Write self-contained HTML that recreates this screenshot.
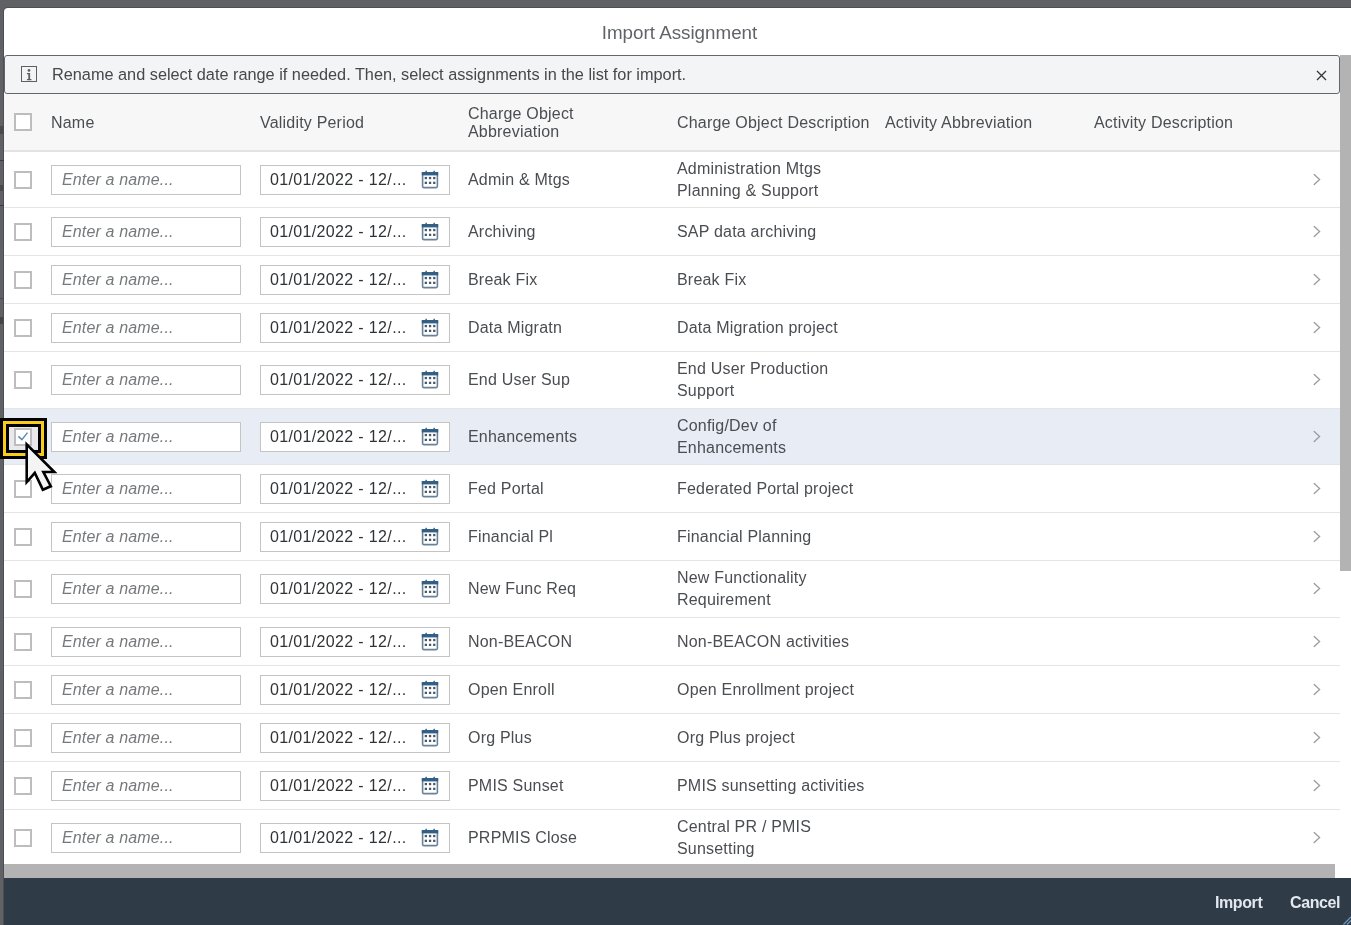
<!DOCTYPE html>
<html><head><meta charset="utf-8"><style>
*{box-sizing:border-box;margin:0;padding:0}
html,body{width:1351px;height:925px;overflow:hidden;background:#5f6164;-webkit-font-smoothing:antialiased;font-family:"Liberation Sans",sans-serif;color:#32363a}
.dlg{will-change:transform;position:absolute;left:4px;top:8px;width:1400px;height:940px;background:#fff;border-radius:4px 0 0 0;box-shadow:0 0 0 1px #4d4f52;overflow:hidden}
.abs{position:absolute}
.title{position:absolute;left:0;top:0;width:1351px;height:47px;text-align:center;font-size:18.8px;line-height:49px;color:#606468}
.info{position:absolute;left:0px;top:47px;width:1336px;height:39px;background:#f2f4f5;border:1px solid #63676b;border-radius:3px}
.info .ic{position:absolute;left:16px;top:10px;width:16px;height:16px;border:1.4px solid #5b6066}
.info .msg{position:absolute;left:47px;top:7px;font-size:16.3px;line-height:22px;white-space:nowrap;color:#45484c}
.info .x{position:absolute;left:1311px;top:14px}
.vs{position:absolute;left:1336px;top:47px;width:15px;height:516px;background:#b3b3b3}
.thead{position:absolute;left:0;top:86px;width:1336px;height:58px;background:#f7f7f7;border-bottom:2px solid #e3e3e3}
.th{position:absolute;font-size:16px;line-height:18px;letter-spacing:0.2px;color:#4a4e52;white-space:nowrap}
.row{position:absolute;left:0;width:1336px;border-bottom:1px solid #e5e5e5;background:#fff}
.row.sel{background:#e8ecf5}
.cb{position:absolute;left:10px;width:18px;height:18px;border:2px solid #bdbdbd;background:#fff;top:50%;margin-top:-9px}
.cb svg{position:absolute;left:0;top:0}
.inp{position:absolute;top:50%;margin-top:-15px;height:30px;width:190px;border:1px solid #c4c4c4;background:#fff}
.inp span{position:absolute;left:11px;top:3px;font-size:16px;line-height:22px;white-space:nowrap}
.nm{left:47px}
.nm span{left:10px;font-style:italic;color:#76797c;letter-spacing:0.15px}
.dt{left:256px}
.dt span{left:9px;color:#303336;letter-spacing:0.35px}
.cal{position:absolute;left:160px;top:3px}
.tx{position:absolute;top:50%;transform:translateY(-50%);font-size:16px;line-height:22px;white-space:nowrap;color:#4a4d51;letter-spacing:0.2px}
.ab{left:464px}
.ds{left:673px}
.chev{position:absolute;left:1309px;top:50%;margin-top:-7px}
.hs{position:absolute;left:0;top:856px;width:1331px;height:14px;background:#b3b3b3}
.foot{position:absolute;left:0;top:870px;width:1400px;height:60px;background:#2f3c48}
.foot span{position:absolute;top:15px;font-size:16px;font-weight:bold;letter-spacing:-0.4px;line-height:20px;color:#e3e8ee}
.focus{position:absolute;left:0;top:418px;width:47px;height:41px;border:3px solid #000;}
.focus .y{position:absolute;left:0;top:0;right:0;bottom:0;border:3px solid #f8cc1c}
.focus .k{position:absolute;left:3px;top:3px;right:3px;bottom:3px;border:3px solid #000;background:#e9e9ed}
.focus .cbx{position:absolute;left:5px;top:1px;width:18px;height:18px;border:2px solid #bdbdbd;background:#fff}
</style></head><body>
<div class="dlg">
 <div class="title">Import Assignment</div>
 <div class="info">
  <div class="ic"><svg width="14" height="14" viewBox="0 0 14 14" style="position:absolute;left:0;top:0"><circle cx="7" cy="3.4" r="1.35" fill="#5b6066"/><path d="M4.9 6 H8.1 V11.9 H9.4 V13.2 H5 V11.9 H6.3 V7.3 H4.9 Z" fill="#5b6066"/></svg></div>
  <div class="msg">Rename and select date range if needed. Then, select assignments in the list for import.</div>
  <svg class="x" width="11" height="11" viewBox="0 0 11 11"><path d="M1 1 L10 10 M10 1 L1 10" stroke="#32363a" stroke-width="1.3"/></svg>
 </div>
 <div class="vs"></div>
 <div class="thead">
  <div class="cb" style="left:10px;top:19px;margin-top:0"></div>
  <div class="th" style="left:47px;top:20px">Name</div>
  <div class="th" style="left:256px;top:20px">Validity Period</div>
  <div class="th" style="left:464px;top:11px">Charge Object<br>Abbreviation</div>
  <div class="th" style="left:673px;top:20px">Charge Object Description</div>
  <div class="th" style="left:881px;top:20px">Activity Abbreviation</div>
  <div class="th" style="left:1090px;top:20px">Activity Description</div>
 </div>
 <div style="position:absolute;left:0;top:-8px">
 <div class="row" style="top:152px;height:56px">
 <div class="c0"><div class="cb"></div></div>
 <div class="inp nm"><span>Enter a name...</span></div>
 <div class="inp dt"><span>01/01/2022 - 12/...</span><svg class="cal" width="18" height="20" viewBox="0 0 18 20"><path d="M1.6 4 H16.4 V17.3 Q16.4 18.6 15.1 18.6 H2.9 Q1.6 18.6 1.6 17.3 Z" fill="#fff" stroke="#6a8299" stroke-width="1.6"/><rect x="0.8" y="3" width="16.4" height="3.4" fill="#335f84"/><rect x="4.4" y="1.8" width="1.5" height="2.6" fill="#335f84"/><rect x="12.4" y="1.8" width="1.5" height="2.6" fill="#335f84"/><g fill="#4a5a69"><rect x="3.7" y="7.9" width="2.3" height="2.3"/><rect x="7.9" y="7.9" width="2.3" height="2.3"/><rect x="12.1" y="7.9" width="2.3" height="2.3"/><rect x="3.7" y="12.7" width="2.3" height="2.3"/><rect x="7.9" y="12.7" width="2.3" height="2.3"/><rect x="12.1" y="12.7" width="2.3" height="2.3"/></g></svg></div>
 <div class="tx ab">Admin &amp; Mtgs</div>
 <div class="tx ds">Administration Mtgs<br>Planning &amp; Support</div>
 <svg class="chev" width="8" height="14" viewBox="0 0 8 14"><path d="M1.2 1.5 L6.6 6.5 L1.2 11.5" fill="none" stroke="#9a9c9e" stroke-width="1.3" stroke-linecap="round"/></svg>
</div><div class="row" style="top:208px;height:48px">
 <div class="c0"><div class="cb"></div></div>
 <div class="inp nm"><span>Enter a name...</span></div>
 <div class="inp dt"><span>01/01/2022 - 12/...</span><svg class="cal" width="18" height="20" viewBox="0 0 18 20"><path d="M1.6 4 H16.4 V17.3 Q16.4 18.6 15.1 18.6 H2.9 Q1.6 18.6 1.6 17.3 Z" fill="#fff" stroke="#6a8299" stroke-width="1.6"/><rect x="0.8" y="3" width="16.4" height="3.4" fill="#335f84"/><rect x="4.4" y="1.8" width="1.5" height="2.6" fill="#335f84"/><rect x="12.4" y="1.8" width="1.5" height="2.6" fill="#335f84"/><g fill="#4a5a69"><rect x="3.7" y="7.9" width="2.3" height="2.3"/><rect x="7.9" y="7.9" width="2.3" height="2.3"/><rect x="12.1" y="7.9" width="2.3" height="2.3"/><rect x="3.7" y="12.7" width="2.3" height="2.3"/><rect x="7.9" y="12.7" width="2.3" height="2.3"/><rect x="12.1" y="12.7" width="2.3" height="2.3"/></g></svg></div>
 <div class="tx ab">Archiving</div>
 <div class="tx ds">SAP data archiving</div>
 <svg class="chev" width="8" height="14" viewBox="0 0 8 14"><path d="M1.2 1.5 L6.6 6.5 L1.2 11.5" fill="none" stroke="#9a9c9e" stroke-width="1.3" stroke-linecap="round"/></svg>
</div><div class="row" style="top:256px;height:48px">
 <div class="c0"><div class="cb"></div></div>
 <div class="inp nm"><span>Enter a name...</span></div>
 <div class="inp dt"><span>01/01/2022 - 12/...</span><svg class="cal" width="18" height="20" viewBox="0 0 18 20"><path d="M1.6 4 H16.4 V17.3 Q16.4 18.6 15.1 18.6 H2.9 Q1.6 18.6 1.6 17.3 Z" fill="#fff" stroke="#6a8299" stroke-width="1.6"/><rect x="0.8" y="3" width="16.4" height="3.4" fill="#335f84"/><rect x="4.4" y="1.8" width="1.5" height="2.6" fill="#335f84"/><rect x="12.4" y="1.8" width="1.5" height="2.6" fill="#335f84"/><g fill="#4a5a69"><rect x="3.7" y="7.9" width="2.3" height="2.3"/><rect x="7.9" y="7.9" width="2.3" height="2.3"/><rect x="12.1" y="7.9" width="2.3" height="2.3"/><rect x="3.7" y="12.7" width="2.3" height="2.3"/><rect x="7.9" y="12.7" width="2.3" height="2.3"/><rect x="12.1" y="12.7" width="2.3" height="2.3"/></g></svg></div>
 <div class="tx ab">Break Fix</div>
 <div class="tx ds">Break Fix</div>
 <svg class="chev" width="8" height="14" viewBox="0 0 8 14"><path d="M1.2 1.5 L6.6 6.5 L1.2 11.5" fill="none" stroke="#9a9c9e" stroke-width="1.3" stroke-linecap="round"/></svg>
</div><div class="row" style="top:304px;height:48px">
 <div class="c0"><div class="cb"></div></div>
 <div class="inp nm"><span>Enter a name...</span></div>
 <div class="inp dt"><span>01/01/2022 - 12/...</span><svg class="cal" width="18" height="20" viewBox="0 0 18 20"><path d="M1.6 4 H16.4 V17.3 Q16.4 18.6 15.1 18.6 H2.9 Q1.6 18.6 1.6 17.3 Z" fill="#fff" stroke="#6a8299" stroke-width="1.6"/><rect x="0.8" y="3" width="16.4" height="3.4" fill="#335f84"/><rect x="4.4" y="1.8" width="1.5" height="2.6" fill="#335f84"/><rect x="12.4" y="1.8" width="1.5" height="2.6" fill="#335f84"/><g fill="#4a5a69"><rect x="3.7" y="7.9" width="2.3" height="2.3"/><rect x="7.9" y="7.9" width="2.3" height="2.3"/><rect x="12.1" y="7.9" width="2.3" height="2.3"/><rect x="3.7" y="12.7" width="2.3" height="2.3"/><rect x="7.9" y="12.7" width="2.3" height="2.3"/><rect x="12.1" y="12.7" width="2.3" height="2.3"/></g></svg></div>
 <div class="tx ab">Data Migratn</div>
 <div class="tx ds">Data Migration project</div>
 <svg class="chev" width="8" height="14" viewBox="0 0 8 14"><path d="M1.2 1.5 L6.6 6.5 L1.2 11.5" fill="none" stroke="#9a9c9e" stroke-width="1.3" stroke-linecap="round"/></svg>
</div><div class="row" style="top:352px;height:57px">
 <div class="c0"><div class="cb"></div></div>
 <div class="inp nm"><span>Enter a name...</span></div>
 <div class="inp dt"><span>01/01/2022 - 12/...</span><svg class="cal" width="18" height="20" viewBox="0 0 18 20"><path d="M1.6 4 H16.4 V17.3 Q16.4 18.6 15.1 18.6 H2.9 Q1.6 18.6 1.6 17.3 Z" fill="#fff" stroke="#6a8299" stroke-width="1.6"/><rect x="0.8" y="3" width="16.4" height="3.4" fill="#335f84"/><rect x="4.4" y="1.8" width="1.5" height="2.6" fill="#335f84"/><rect x="12.4" y="1.8" width="1.5" height="2.6" fill="#335f84"/><g fill="#4a5a69"><rect x="3.7" y="7.9" width="2.3" height="2.3"/><rect x="7.9" y="7.9" width="2.3" height="2.3"/><rect x="12.1" y="7.9" width="2.3" height="2.3"/><rect x="3.7" y="12.7" width="2.3" height="2.3"/><rect x="7.9" y="12.7" width="2.3" height="2.3"/><rect x="12.1" y="12.7" width="2.3" height="2.3"/></g></svg></div>
 <div class="tx ab">End User Sup</div>
 <div class="tx ds">End User Production<br>Support</div>
 <svg class="chev" width="8" height="14" viewBox="0 0 8 14"><path d="M1.2 1.5 L6.6 6.5 L1.2 11.5" fill="none" stroke="#9a9c9e" stroke-width="1.3" stroke-linecap="round"/></svg>
</div><div class="row sel" style="top:409px;height:56px">
 <div class="c0"><div class="cb"><svg width="14" height="14" viewBox="0 0 14 14"><path d="M2.4 6.4 L5.9 9.6 L11.5 2.6" fill="none" stroke="#5a8ab3" stroke-width="1.45"/></svg></div></div>
 <div class="inp nm"><span>Enter a name...</span></div>
 <div class="inp dt"><span>01/01/2022 - 12/...</span><svg class="cal" width="18" height="20" viewBox="0 0 18 20"><path d="M1.6 4 H16.4 V17.3 Q16.4 18.6 15.1 18.6 H2.9 Q1.6 18.6 1.6 17.3 Z" fill="#fff" stroke="#6a8299" stroke-width="1.6"/><rect x="0.8" y="3" width="16.4" height="3.4" fill="#335f84"/><rect x="4.4" y="1.8" width="1.5" height="2.6" fill="#335f84"/><rect x="12.4" y="1.8" width="1.5" height="2.6" fill="#335f84"/><g fill="#4a5a69"><rect x="3.7" y="7.9" width="2.3" height="2.3"/><rect x="7.9" y="7.9" width="2.3" height="2.3"/><rect x="12.1" y="7.9" width="2.3" height="2.3"/><rect x="3.7" y="12.7" width="2.3" height="2.3"/><rect x="7.9" y="12.7" width="2.3" height="2.3"/><rect x="12.1" y="12.7" width="2.3" height="2.3"/></g></svg></div>
 <div class="tx ab">Enhancements</div>
 <div class="tx ds">Config/Dev of<br>Enhancements</div>
 <svg class="chev" width="8" height="14" viewBox="0 0 8 14"><path d="M1.2 1.5 L6.6 6.5 L1.2 11.5" fill="none" stroke="#9a9c9e" stroke-width="1.3" stroke-linecap="round"/></svg>
</div><div class="row" style="top:465px;height:48px">
 <div class="c0"><div class="cb"></div></div>
 <div class="inp nm"><span>Enter a name...</span></div>
 <div class="inp dt"><span>01/01/2022 - 12/...</span><svg class="cal" width="18" height="20" viewBox="0 0 18 20"><path d="M1.6 4 H16.4 V17.3 Q16.4 18.6 15.1 18.6 H2.9 Q1.6 18.6 1.6 17.3 Z" fill="#fff" stroke="#6a8299" stroke-width="1.6"/><rect x="0.8" y="3" width="16.4" height="3.4" fill="#335f84"/><rect x="4.4" y="1.8" width="1.5" height="2.6" fill="#335f84"/><rect x="12.4" y="1.8" width="1.5" height="2.6" fill="#335f84"/><g fill="#4a5a69"><rect x="3.7" y="7.9" width="2.3" height="2.3"/><rect x="7.9" y="7.9" width="2.3" height="2.3"/><rect x="12.1" y="7.9" width="2.3" height="2.3"/><rect x="3.7" y="12.7" width="2.3" height="2.3"/><rect x="7.9" y="12.7" width="2.3" height="2.3"/><rect x="12.1" y="12.7" width="2.3" height="2.3"/></g></svg></div>
 <div class="tx ab">Fed Portal</div>
 <div class="tx ds">Federated Portal project</div>
 <svg class="chev" width="8" height="14" viewBox="0 0 8 14"><path d="M1.2 1.5 L6.6 6.5 L1.2 11.5" fill="none" stroke="#9a9c9e" stroke-width="1.3" stroke-linecap="round"/></svg>
</div><div class="row" style="top:513px;height:48px">
 <div class="c0"><div class="cb"></div></div>
 <div class="inp nm"><span>Enter a name...</span></div>
 <div class="inp dt"><span>01/01/2022 - 12/...</span><svg class="cal" width="18" height="20" viewBox="0 0 18 20"><path d="M1.6 4 H16.4 V17.3 Q16.4 18.6 15.1 18.6 H2.9 Q1.6 18.6 1.6 17.3 Z" fill="#fff" stroke="#6a8299" stroke-width="1.6"/><rect x="0.8" y="3" width="16.4" height="3.4" fill="#335f84"/><rect x="4.4" y="1.8" width="1.5" height="2.6" fill="#335f84"/><rect x="12.4" y="1.8" width="1.5" height="2.6" fill="#335f84"/><g fill="#4a5a69"><rect x="3.7" y="7.9" width="2.3" height="2.3"/><rect x="7.9" y="7.9" width="2.3" height="2.3"/><rect x="12.1" y="7.9" width="2.3" height="2.3"/><rect x="3.7" y="12.7" width="2.3" height="2.3"/><rect x="7.9" y="12.7" width="2.3" height="2.3"/><rect x="12.1" y="12.7" width="2.3" height="2.3"/></g></svg></div>
 <div class="tx ab">Financial Pl</div>
 <div class="tx ds">Financial Planning</div>
 <svg class="chev" width="8" height="14" viewBox="0 0 8 14"><path d="M1.2 1.5 L6.6 6.5 L1.2 11.5" fill="none" stroke="#9a9c9e" stroke-width="1.3" stroke-linecap="round"/></svg>
</div><div class="row" style="top:561px;height:57px">
 <div class="c0"><div class="cb"></div></div>
 <div class="inp nm"><span>Enter a name...</span></div>
 <div class="inp dt"><span>01/01/2022 - 12/...</span><svg class="cal" width="18" height="20" viewBox="0 0 18 20"><path d="M1.6 4 H16.4 V17.3 Q16.4 18.6 15.1 18.6 H2.9 Q1.6 18.6 1.6 17.3 Z" fill="#fff" stroke="#6a8299" stroke-width="1.6"/><rect x="0.8" y="3" width="16.4" height="3.4" fill="#335f84"/><rect x="4.4" y="1.8" width="1.5" height="2.6" fill="#335f84"/><rect x="12.4" y="1.8" width="1.5" height="2.6" fill="#335f84"/><g fill="#4a5a69"><rect x="3.7" y="7.9" width="2.3" height="2.3"/><rect x="7.9" y="7.9" width="2.3" height="2.3"/><rect x="12.1" y="7.9" width="2.3" height="2.3"/><rect x="3.7" y="12.7" width="2.3" height="2.3"/><rect x="7.9" y="12.7" width="2.3" height="2.3"/><rect x="12.1" y="12.7" width="2.3" height="2.3"/></g></svg></div>
 <div class="tx ab">New Func Req</div>
 <div class="tx ds">New Functionality<br>Requirement</div>
 <svg class="chev" width="8" height="14" viewBox="0 0 8 14"><path d="M1.2 1.5 L6.6 6.5 L1.2 11.5" fill="none" stroke="#9a9c9e" stroke-width="1.3" stroke-linecap="round"/></svg>
</div><div class="row" style="top:618px;height:48px">
 <div class="c0"><div class="cb"></div></div>
 <div class="inp nm"><span>Enter a name...</span></div>
 <div class="inp dt"><span>01/01/2022 - 12/...</span><svg class="cal" width="18" height="20" viewBox="0 0 18 20"><path d="M1.6 4 H16.4 V17.3 Q16.4 18.6 15.1 18.6 H2.9 Q1.6 18.6 1.6 17.3 Z" fill="#fff" stroke="#6a8299" stroke-width="1.6"/><rect x="0.8" y="3" width="16.4" height="3.4" fill="#335f84"/><rect x="4.4" y="1.8" width="1.5" height="2.6" fill="#335f84"/><rect x="12.4" y="1.8" width="1.5" height="2.6" fill="#335f84"/><g fill="#4a5a69"><rect x="3.7" y="7.9" width="2.3" height="2.3"/><rect x="7.9" y="7.9" width="2.3" height="2.3"/><rect x="12.1" y="7.9" width="2.3" height="2.3"/><rect x="3.7" y="12.7" width="2.3" height="2.3"/><rect x="7.9" y="12.7" width="2.3" height="2.3"/><rect x="12.1" y="12.7" width="2.3" height="2.3"/></g></svg></div>
 <div class="tx ab">Non-BEACON</div>
 <div class="tx ds">Non-BEACON activities</div>
 <svg class="chev" width="8" height="14" viewBox="0 0 8 14"><path d="M1.2 1.5 L6.6 6.5 L1.2 11.5" fill="none" stroke="#9a9c9e" stroke-width="1.3" stroke-linecap="round"/></svg>
</div><div class="row" style="top:666px;height:48px">
 <div class="c0"><div class="cb"></div></div>
 <div class="inp nm"><span>Enter a name...</span></div>
 <div class="inp dt"><span>01/01/2022 - 12/...</span><svg class="cal" width="18" height="20" viewBox="0 0 18 20"><path d="M1.6 4 H16.4 V17.3 Q16.4 18.6 15.1 18.6 H2.9 Q1.6 18.6 1.6 17.3 Z" fill="#fff" stroke="#6a8299" stroke-width="1.6"/><rect x="0.8" y="3" width="16.4" height="3.4" fill="#335f84"/><rect x="4.4" y="1.8" width="1.5" height="2.6" fill="#335f84"/><rect x="12.4" y="1.8" width="1.5" height="2.6" fill="#335f84"/><g fill="#4a5a69"><rect x="3.7" y="7.9" width="2.3" height="2.3"/><rect x="7.9" y="7.9" width="2.3" height="2.3"/><rect x="12.1" y="7.9" width="2.3" height="2.3"/><rect x="3.7" y="12.7" width="2.3" height="2.3"/><rect x="7.9" y="12.7" width="2.3" height="2.3"/><rect x="12.1" y="12.7" width="2.3" height="2.3"/></g></svg></div>
 <div class="tx ab">Open Enroll</div>
 <div class="tx ds">Open Enrollment project</div>
 <svg class="chev" width="8" height="14" viewBox="0 0 8 14"><path d="M1.2 1.5 L6.6 6.5 L1.2 11.5" fill="none" stroke="#9a9c9e" stroke-width="1.3" stroke-linecap="round"/></svg>
</div><div class="row" style="top:714px;height:48px">
 <div class="c0"><div class="cb"></div></div>
 <div class="inp nm"><span>Enter a name...</span></div>
 <div class="inp dt"><span>01/01/2022 - 12/...</span><svg class="cal" width="18" height="20" viewBox="0 0 18 20"><path d="M1.6 4 H16.4 V17.3 Q16.4 18.6 15.1 18.6 H2.9 Q1.6 18.6 1.6 17.3 Z" fill="#fff" stroke="#6a8299" stroke-width="1.6"/><rect x="0.8" y="3" width="16.4" height="3.4" fill="#335f84"/><rect x="4.4" y="1.8" width="1.5" height="2.6" fill="#335f84"/><rect x="12.4" y="1.8" width="1.5" height="2.6" fill="#335f84"/><g fill="#4a5a69"><rect x="3.7" y="7.9" width="2.3" height="2.3"/><rect x="7.9" y="7.9" width="2.3" height="2.3"/><rect x="12.1" y="7.9" width="2.3" height="2.3"/><rect x="3.7" y="12.7" width="2.3" height="2.3"/><rect x="7.9" y="12.7" width="2.3" height="2.3"/><rect x="12.1" y="12.7" width="2.3" height="2.3"/></g></svg></div>
 <div class="tx ab">Org Plus</div>
 <div class="tx ds">Org Plus project</div>
 <svg class="chev" width="8" height="14" viewBox="0 0 8 14"><path d="M1.2 1.5 L6.6 6.5 L1.2 11.5" fill="none" stroke="#9a9c9e" stroke-width="1.3" stroke-linecap="round"/></svg>
</div><div class="row" style="top:762px;height:48px">
 <div class="c0"><div class="cb"></div></div>
 <div class="inp nm"><span>Enter a name...</span></div>
 <div class="inp dt"><span>01/01/2022 - 12/...</span><svg class="cal" width="18" height="20" viewBox="0 0 18 20"><path d="M1.6 4 H16.4 V17.3 Q16.4 18.6 15.1 18.6 H2.9 Q1.6 18.6 1.6 17.3 Z" fill="#fff" stroke="#6a8299" stroke-width="1.6"/><rect x="0.8" y="3" width="16.4" height="3.4" fill="#335f84"/><rect x="4.4" y="1.8" width="1.5" height="2.6" fill="#335f84"/><rect x="12.4" y="1.8" width="1.5" height="2.6" fill="#335f84"/><g fill="#4a5a69"><rect x="3.7" y="7.9" width="2.3" height="2.3"/><rect x="7.9" y="7.9" width="2.3" height="2.3"/><rect x="12.1" y="7.9" width="2.3" height="2.3"/><rect x="3.7" y="12.7" width="2.3" height="2.3"/><rect x="7.9" y="12.7" width="2.3" height="2.3"/><rect x="12.1" y="12.7" width="2.3" height="2.3"/></g></svg></div>
 <div class="tx ab">PMIS Sunset</div>
 <div class="tx ds">PMIS sunsetting activities</div>
 <svg class="chev" width="8" height="14" viewBox="0 0 8 14"><path d="M1.2 1.5 L6.6 6.5 L1.2 11.5" fill="none" stroke="#9a9c9e" stroke-width="1.3" stroke-linecap="round"/></svg>
</div><div class="row" style="top:810px;height:56px;border-bottom:none">
 <div class="c0"><div class="cb"></div></div>
 <div class="inp nm"><span>Enter a name...</span></div>
 <div class="inp dt"><span>01/01/2022 - 12/...</span><svg class="cal" width="18" height="20" viewBox="0 0 18 20"><path d="M1.6 4 H16.4 V17.3 Q16.4 18.6 15.1 18.6 H2.9 Q1.6 18.6 1.6 17.3 Z" fill="#fff" stroke="#6a8299" stroke-width="1.6"/><rect x="0.8" y="3" width="16.4" height="3.4" fill="#335f84"/><rect x="4.4" y="1.8" width="1.5" height="2.6" fill="#335f84"/><rect x="12.4" y="1.8" width="1.5" height="2.6" fill="#335f84"/><g fill="#4a5a69"><rect x="3.7" y="7.9" width="2.3" height="2.3"/><rect x="7.9" y="7.9" width="2.3" height="2.3"/><rect x="12.1" y="7.9" width="2.3" height="2.3"/><rect x="3.7" y="12.7" width="2.3" height="2.3"/><rect x="7.9" y="12.7" width="2.3" height="2.3"/><rect x="12.1" y="12.7" width="2.3" height="2.3"/></g></svg></div>
 <div class="tx ab">PRPMIS Close</div>
 <div class="tx ds">Central PR / PMIS<br>Sunsetting</div>
 <svg class="chev" width="8" height="14" viewBox="0 0 8 14"><path d="M1.2 1.5 L6.6 6.5 L1.2 11.5" fill="none" stroke="#9a9c9e" stroke-width="1.3" stroke-linecap="round"/></svg>
</div>
 </div>
 <div class="hs"></div>
 <div class="foot"><span style="left:1211px">Import</span><span style="left:1286px">Cancel</span></div>
</div>
<div class="focus"><div class="y"></div><div class="k"><div class="cbx"><svg width="14" height="14" viewBox="0 0 14 14" style="position:absolute;left:0;top:0"><path d="M2.4 6.4 L5.9 9.6 L11.5 2.6" fill="none" stroke="#5a8ab3" stroke-width="1.45"/></svg></div></div></div>
<svg style="position:absolute;left:1343px;top:915px" width="8" height="10" viewBox="0 0 8 10"><path d="M0.5 9.5 L8 2 M4 9.5 L8 5.5" stroke="#6f9ac0" stroke-width="1.2"/></svg>
<div style="position:absolute;left:0;top:126px;width:3px;height:8px;background:#4a4a4a"></div><div style="position:absolute;left:0;top:160px;width:4px;height:1px;background:#3c3c3c"></div><div style="position:absolute;left:0;top:185px;width:3px;height:6px;background:#4a4a4a"></div><div style="position:absolute;left:0;top:205px;width:4px;height:1px;background:#3c3c3c"></div><div style="position:absolute;left:0;top:298px;width:4px;height:1px;background:#4a4a4a"></div><div style="position:absolute;left:0;top:317px;width:3px;height:7px;background:#444"></div>
<svg style="position:absolute;left:0;top:0" width="1351" height="925"><polygon points="25.4,441.2 25.4,485.6 34.5,475.2 42.2,491.4 52.6,486.9 45.5,473.3 57.5,473.3" fill="#000"/><polygon points="28.0,447.5 28.0,478.7 35.1,470.5 43.5,488.0 49.0,485.6 41.2,470.7 51.2,470.7" fill="#f4f4f4"/></svg>
</body></html>
